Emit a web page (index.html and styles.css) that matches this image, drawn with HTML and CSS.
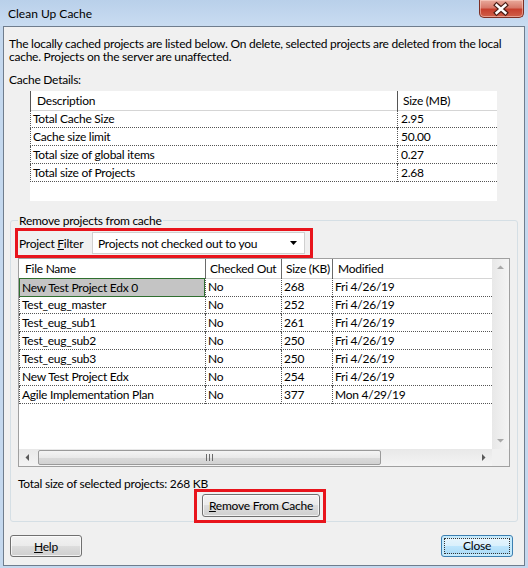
FILE: index.html
```html
<!DOCTYPE html>
<html lang="en">
<head>
    <meta charset="UTF-8">
    <meta name="viewport" content="width=device-width, initial-scale=1.0">
    <title>Clean Up Cache</title>
    <link rel="stylesheet" href="styles.css">
</head>
<body>
    <div class="window">
        <div class="titlebar">
            <span class="title">Clean Up Cache</span>
            <span class="close-x">
                <svg width="45" height="18" viewBox="0 0 45 18">
                    <path d="M18 5 L27 13 M27 5 L18 13" stroke="#4a1c14" stroke-width="5" stroke-linecap="square"/>
                    <path d="M18 5 L27 13 M27 5 L18 13" stroke="#fff" stroke-width="2.6" stroke-linecap="square"/>
                </svg>
            </span>
        </div>

        <div class="dialog">
            <p class="intro">The locally cached projects are listed below. On delete, selected projects are deleted from the local cache. Projects on the server are unaffected.</p>

            <div class="caption">Cache Details:</div>
            <div class="cache-list">
                <div class="crow head"><div class="cell">Description</div><div class="cell">Size (MB)</div></div>
                <div class="crow"><div class="cell">Total Cache Size</div><div class="cell">2.95</div></div>
                <div class="crow"><div class="cell">Cache size limit</div><div class="cell">50.00</div></div>
                <div class="crow"><div class="cell">Total size of global items</div><div class="cell">0.27</div></div>
                <div class="crow"><div class="cell">Total size of Projects</div><div class="cell">2.68</div></div>
            </div>

            <fieldset class="group">
                <legend>Remove projects from cache</legend>

                <div class="mark filter-row">
                    <label>Project <u>F</u>ilter</label>
                    <div class="combo">
                        <span>Projects not checked out to you</span>
                        <svg width="8" height="5" viewBox="0 0 8 5"><polygon points="0,0 7,0 3.5,4" fill="#000"/></svg>
                    </div>
                </div>

                <div class="files">
                    <div class="files-view">
                        <div class="frow head">
                            <div class="cell">File Name</div>
                            <div class="cell">Checked Out</div>
                            <div class="cell">Size (KB)</div>
                            <div class="cell">Modified</div>
                        </div>
                        <div class="frow">
                            <div class="cell selected">New Test Project Edx 0</div>
                            <div class="cell">No</div><div class="cell">268</div><div class="cell">Fri 4/26/19</div>
                        </div>
                        <div class="frow">
                            <div class="cell">Test_eug_master</div>
                            <div class="cell">No</div><div class="cell">252</div><div class="cell">Fri 4/26/19</div>
                        </div>
                        <div class="frow">
                            <div class="cell">Test_eug_sub1</div>
                            <div class="cell">No</div><div class="cell">261</div><div class="cell">Fri 4/26/19</div>
                        </div>
                        <div class="frow">
                            <div class="cell">Test_eug_sub2</div>
                            <div class="cell">No</div><div class="cell">250</div><div class="cell">Fri 4/26/19</div>
                        </div>
                        <div class="frow">
                            <div class="cell">Test_eug_sub3</div>
                            <div class="cell">No</div><div class="cell">250</div><div class="cell">Fri 4/26/19</div>
                        </div>
                        <div class="frow">
                            <div class="cell">New Test Project Edx</div>
                            <div class="cell">No</div><div class="cell">254</div><div class="cell">Fri 4/26/19</div>
                        </div>
                        <div class="frow">
                            <div class="cell">Agile Implementation Plan</div>
                            <div class="cell">No</div><div class="cell">377</div><div class="cell">Mon 4/29/19</div>
                        </div>
                    </div>

                    <div class="vscroll">
                        <svg width="17" height="17" viewBox="0 0 17 17"><polygon points="5,10 12,10 8.5,6.5" fill="#a8a8a8"/></svg>
                        <svg width="17" height="17" viewBox="0 0 17 17"><polygon points="5,7 12,7 8.5,10.5" fill="#a8a8a8"/></svg>
                    </div>

                    <div class="hscroll">
                        <svg width="17" height="17" viewBox="0 0 17 17"><polygon points="10,5 10,12 6.5,8.5" fill="#5a5a5a"/></svg>
                        <div class="thumb">
                            <svg width="7" height="7" viewBox="0 0 7 7">
                                <path d="M0.5 0 V7 M3.5 0 V7 M6.5 0 V7" stroke="#6b6b6b" stroke-width="1"/>
                            </svg>
                        </div>
                        <svg class="right-arrow" width="17" height="17" viewBox="0 0 17 17"><polygon points="7,5 7,12 10.5,8.5" fill="#5a5a5a"/></svg>
                    </div>
                    <div class="corner"></div>
                </div>

                <div class="total">Total size of selected projects: 268 KB</div>

                <div class="mark remove-wrap">
                    <button class="btn"><u>R</u>emove From Cache</button>
                </div>
            </fieldset>

            <div class="footer">
                <button class="btn small"><u>H</u>elp</button>
                <button class="btn small default"><span class="focus">Close</span></button>
            </div>
        </div>
    </div>
</body>
</html>
```

FILE: styles.css
```css
* {
    box-sizing: border-box;
}
body {
    margin: 0;
    font-family: Lato, "Open Sans", sans-serif;
    font-size: 12px;
    letter-spacing: -0.25px;
    color: #000;
}
.window {
    width: 528px;
    height: 568px;
    display: flex;
    flex-direction: column;
    background: #c4d8ee;
}

/* title bar */
.titlebar {
    height: 26px;
    display: flex;
    justify-content: space-between;
    align-items: flex-start;
    background: linear-gradient(#b9d0ea, #c9dcf1);
}
.title {
    padding: 6px 0 0 8px;
    line-height: 15px;
    letter-spacing: 0;
}
.close-x {
    width: 45px;
    height: 18px;
    margin-right: 4px;
    border: 1px solid #7d2f24;
    border-top: none;
    border-radius: 0 0 5px 5px;
    background: linear-gradient(#e9aa9c, #d7796a 45%, #c7402e 55%, #d0604a);
    box-shadow: inset 0 0 0 1px rgba(255, 220, 210, 0.5);
    display: flex;
    justify-content: center;
}
.close-x svg {
    margin-left: -1px;
}

/* dialog body */
.dialog {
    flex: 1;
    margin: 0 3px 2px;
    border: 1px solid #6f7d8d;
    background: #f0f0f0;
    padding-top: 10px;
}
.intro {
    margin: 0;
    padding: 0 2px 0 5px;
    line-height: 13px;
}
.caption {
    margin-top: 9px;
    padding-left: 5px;
    line-height: 15px;
}

/* cache details list */
.cache-list {
    margin: 4px 0 0 26px;
    width: 467px;
    height: 110px;
    background: #fff;
}
.crow {
    display: grid;
    grid-template-columns: 367px 100px;
    height: 18px;
}
.crow .cell {
    line-height: 17px;
    border-bottom: 1px dotted #555;
    border-left: 1px dotted #555;
    padding-left: 2px;
    white-space: nowrap;
}
.crow .cell + .cell {
    padding-left: 3px;
}
.crow.head {
    height: 19px;
}
.crow.head .cell {
    line-height: 19px;
    border-left: 1px solid #555;
    border-bottom: 1px solid #d5d5d5;
    padding-left: 6px;
}
.crow.head .cell + .cell {
    padding-left: 5px;
}

/* group box */
.group {
    margin: 12px 6px 0;
    padding: 0 7px 0 4px;
    border: 1px solid #d5dfe5;
    border-radius: 3px;
    min-width: 0;
}
.group legend {
    margin-left: 3px;
    padding: 0 1px;
    line-height: 15px;
}
.mark {
    border: 3px solid #e8141c;
}
.filter-row {
    width: 298px;
    height: 30px;
    display: flex;
    align-items: center;
}
.filter-row label {
    padding-left: 1px;
    line-height: 15px;
}
.combo {
    margin-left: auto;
    margin-right: 5px;
    width: 213px;
    height: 22px;
    background: #fff;
    border: 1px solid #d0d0d0;
    display: flex;
    align-items: center;
    justify-content: space-between;
    padding: 0 6px 0 5px;
}

/* files list */
.files {
    margin-left: 3px;
    height: 209px;
    border: 1px solid #a0a0a0;
    background: #fff;
    display: grid;
    grid-template-columns: 473px 17px;
    grid-template-rows: 190px 17px;
}
.files-view {
    overflow: hidden;
}
.frow {
    display: grid;
    grid-template-columns: 186px 76px 51px 160px;
    height: 18px;
}
.frow .cell {
    line-height: 17px;
    border-bottom: 1px dotted #555;
    border-left: 1px dotted #555;
    padding-left: 2px;
    white-space: nowrap;
}
.frow .cell.selected {
    background: #c4c4c4;
    border: 1px solid #2f6f2f;
}
.frow.head {
    height: 19px;
}
.frow.head .cell {
    line-height: 19px;
    border-left: 1px solid #6a6a6a;
    border-bottom: 1px solid #d5d5d5;
    padding-left: 4px;
}
.frow.head .cell:first-child {
    border-left-color: #fff;
    padding-left: 5px;
}
.frow.head .cell:last-child {
    padding-left: 5px;
}
.vscroll {
    background: linear-gradient(to right, #e8e8e8, #f4f4f4);
    display: flex;
    flex-direction: column;
    justify-content: space-between;
}
.hscroll {
    background: linear-gradient(#e8e8e8, #f4f4f4);
    display: flex;
    align-items: center;
}
.thumb {
    margin-left: 2px;
    width: 343px;
    height: 15px;
    border: 1px solid #9a9a9a;
    border-radius: 2px;
    background: linear-gradient(#f4f4f4, #e9e9e9 50%, #dadada 51%, #d2d2d2);
    display: flex;
    align-items: center;
    justify-content: center;
}
.right-arrow {
    margin-left: auto;
}
.corner {
    background: #f0f0f0;
}

.total {
    margin-top: 9px;
    padding-left: 3px;
    line-height: 15px;
}
.remove-wrap {
    margin: -2px 0 -2px 179px;
    width: 132px;
    padding: 2px 3px 3px 5px;
}

/* buttons */
.btn {
    font-family: inherit;
    font-size: 12px;
    letter-spacing: inherit;
    color: #000;
    width: 118px;
    height: 23px;
    padding: 0;
    border: 1px solid #707070;
    border-radius: 3px;
    background: linear-gradient(#f2f2f2, #ebebeb 49%, #dddddd 50%, #cfcfcf);
    box-shadow: inset 0 0 0 1px rgba(255, 255, 255, 0.7);
}
.btn.small {
    width: 72px;
    height: 22px;
}
.btn.default {
    border-color: #3c7fb1;
    background: linear-gradient(#eaf6fd, #d9f0fc 49%, #bee6fd 50%, #a7d9f5);
    box-shadow: inset 0 0 0 2px #c5eafc;
    display: flex;
    padding: 2px;
}
.focus {
    flex: 1;
    border: 1px dotted #333;
    line-height: 14px;
}
.footer {
    margin-top: 13px;
    display: flex;
    justify-content: space-between;
    padding: 0 11px 0 6px;
}
```
